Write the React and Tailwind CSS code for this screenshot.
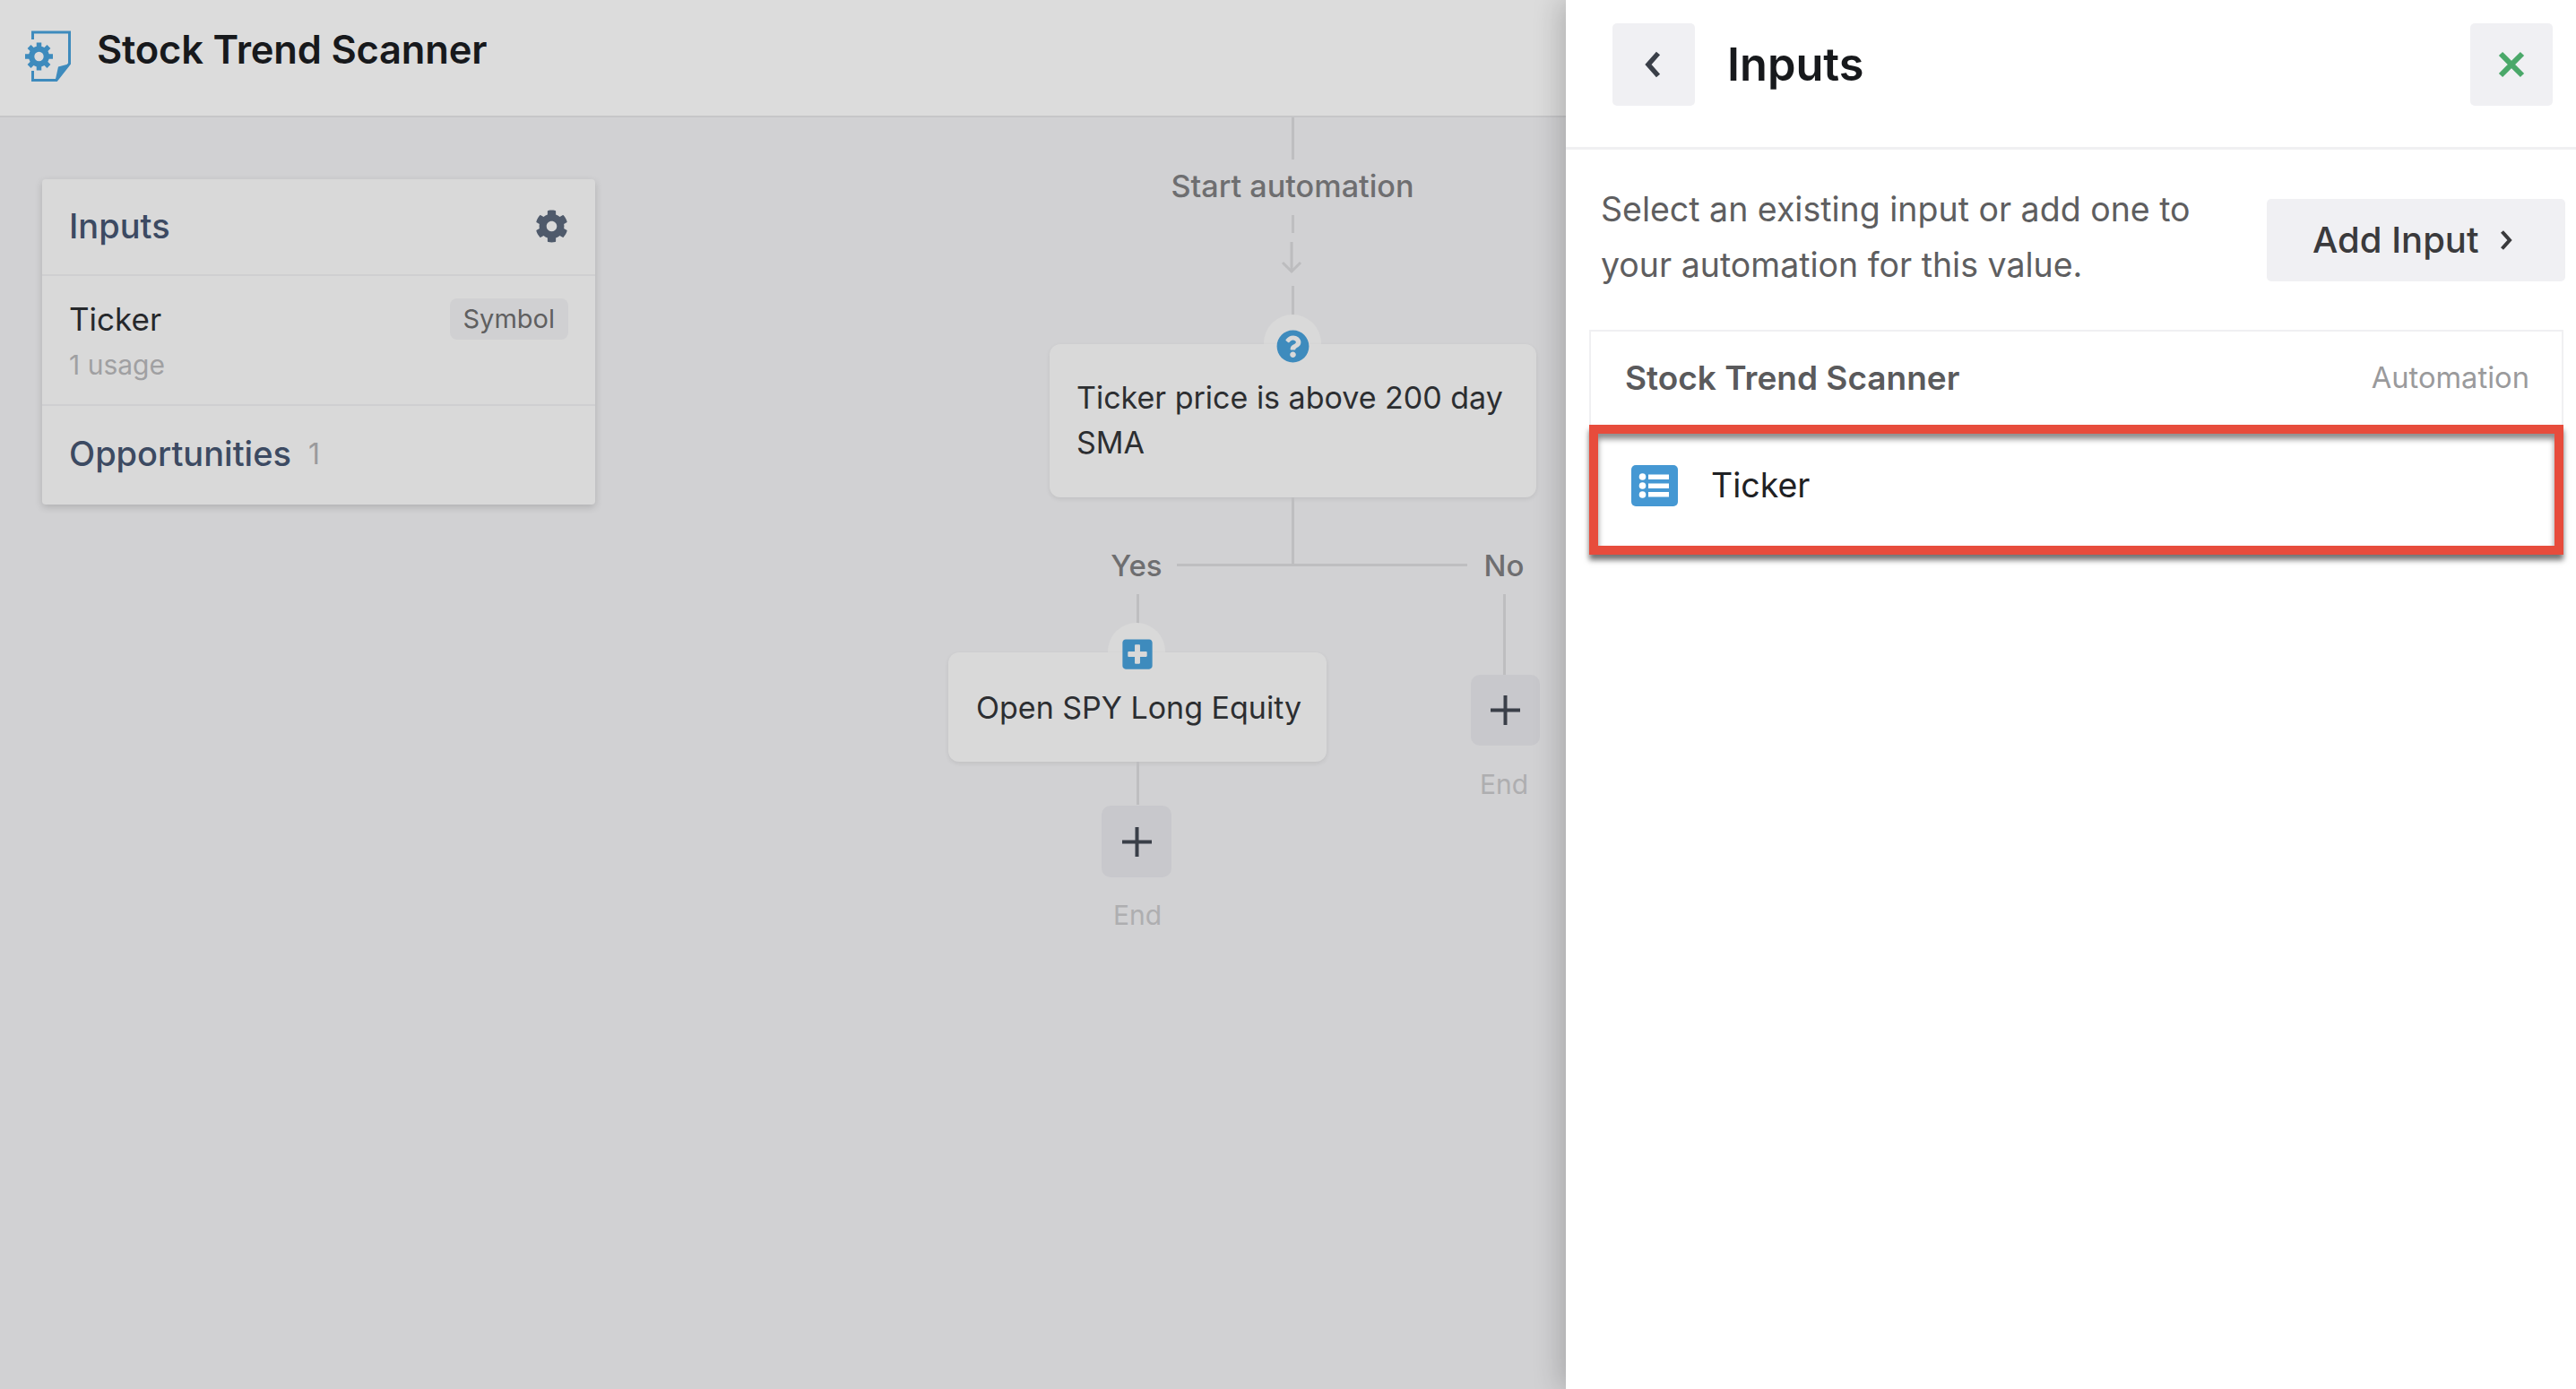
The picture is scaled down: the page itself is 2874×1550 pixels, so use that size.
import React from "react";
import { FaCog, FaQuestionCircle, FaPlusSquare } from "react-icons/fa";

function Logo() {
  const teeth = [0, 45, 90, 135];
  return (
    <svg width="51" height="58" viewBox="0 0 51 58" className="shrink-0 text-[#3e8bbd]" fill="none">
      <path d="M8.5 10V2H49.5V37L35 55.5H8.5V45" stroke="currentColor" strokeWidth="3" />
      <path d="M50 37L37 40.5L33.5 56.5Z" fill="currentColor" />
      <circle cx="15.5" cy="29" r="8.5" stroke="currentColor" strokeWidth="6" />
      {teeth.map((a) => (
        <line key={a} x1="15.5" y1="13.5" x2="15.5" y2="44.5" stroke="currentColor" strokeWidth="5.5" transform={`rotate(${a} 15.5 29)`} />
      ))}
      <circle cx="15.5" cy="29" r="5.2" fill="#dcdcdc" />
    </svg>
  );
}

function ListIcon() {
  return (
    <svg width="52" height="46" viewBox="0 0 52 46" className="shrink-0">
      <rect width="52" height="46" rx="5" fill="#4598d3" />
      <g fill="#ffffff">
        <circle cx="12.5" cy="13" r="3.8" />
        <circle cx="12.5" cy="23" r="3.8" />
        <circle cx="12.5" cy="33" r="3.8" />
        <rect x="19" y="10.5" width="23" height="5.5" />
        <rect x="19" y="20.5" width="23" height="5.5" />
        <rect x="19" y="30" width="23" height="5.5" />
      </g>
    </svg>
  );
}

function PlusGlyph() {
  return (
    <svg width="33" height="33" viewBox="0 0 33 33">
      <path d="M16.5 0V33M0 16.5H33" stroke="#3a3f48" strokeWidth="4" />
    </svg>
  );
}

function Bump({ className }) {
  return <div className={`absolute w-[64px] h-[64px] rounded-full bg-[#d9d9d9] ${className}`} />;
}

function Line({ className }) {
  return <div className={`absolute bg-[#bebec0] ${className}`} />;
}

export default function App() {
  return (
    <div className="flex w-full h-[1550px] overflow-hidden bg-white font-['Inter',sans-serif]">
      <div className="relative flex-1 flex flex-col bg-[#d1d1d3]">
        <header className="h-[131px] shrink-0 flex items-center gap-[29px] pl-[28px] pb-[4px] bg-[#dcdcdc] border-b-2 border-[#c6c6c8]">
          <Logo />
          <h1 className="mb-[14px] text-[43.5px] leading-none font-semibold text-[#17191c] tracking-[-0.2px]">Stock Trend Scanner</h1>
        </header>

        <section className="mt-[69px] ml-[47px] w-[617px] bg-[#d9d9d9] rounded-[4px] shadow-[0_3px_8px_rgba(0,0,0,0.16)]">
          <div className="h-[108px] flex items-center justify-between pl-[30px] pr-[30px] pb-[2px] border-b-2 border-[#cfcfd1]">
            <span className="text-[38px] font-medium text-[#3c4a62]">Inputs</span>
            <FaCog className="text-[37px] text-[#4f5a6b]" />
          </div>
          <div className="h-[145px] pl-[30px] pr-[30px] pt-[25px] border-b-2 border-[#cfcfd1]">
            <div className="flex items-center justify-between h-[46px]">
              <span className="text-[35px] text-[#26282b]">Ticker</span>
              <span className="h-[46px] px-[15px] flex items-center rounded-[8px] bg-[#d0d0d2] text-[29px] text-[#5f5f60]">Symbol</span>
            </div>
            <div className="mt-[8px] text-[30px] leading-[40px] text-[#a0a0a2]">1 usage</div>
          </div>
          <div className="h-[110px] flex items-center gap-[19px] pl-[30px] pb-[3px]">
            <span className="text-[38px] font-medium text-[#3c4a62]">Opportunities</span>
            <span className="text-[32px] text-[#9a9a9c]">1</span>
          </div>
        </section>

        <Line className="left-[1441px] top-[131px] w-[3px] h-[47px]" />
        <div className="absolute left-[1242px] top-[183px] w-[400px] text-center text-[34.2px] leading-[50px] font-medium text-[#6e6e70]">Start automation</div>
        <Line className="left-[1441px] top-[240px] w-[3px] h-[20px]" />
        <svg className="absolute left-[1429px] top-[270px]" width="24" height="36" viewBox="0 0 24 36" fill="none">
          <path d="M12 0V33M2 23L12 33L22 23" stroke="#bcbcbe" strokeWidth="3" />
        </svg>
        <Line className="left-[1441px] top-[319px] w-[3px] h-[33px]" />

        <Bump className="left-[1410px] top-[351px]" />
        <div className="absolute left-[1171px] top-[384px] w-[543px] h-[171px] rounded-[12px] bg-[#d9d9d9] shadow-[0_2px_5px_rgba(0,0,0,0.08)] pl-[30px] pr-[10px] pt-[35px] text-[34px] leading-[50px] text-[#2c2e31]">
          Ticker price is above 200 day SMA
        </div>
        <FaQuestionCircle className="absolute left-[1424px] top-[368px] text-[37px] text-[#3e8bbd]" />

        <Line className="left-[1441px] top-[555px] w-[3px] h-[75px]" />
        <Line className="left-[1313px] top-[629px] w-[324px] h-[3px]" />
        <div className="absolute left-[1218px] top-[606px] w-[100px] text-center text-[33px] leading-[50px] font-medium text-[#6e6e70]">Yes</div>
        <div className="absolute left-[1628px] top-[606px] w-[100px] text-center text-[33px] leading-[50px] font-medium text-[#6e6e70]">No</div>
        <Line className="left-[1268px] top-[663px] w-[3px] h-[33px]" />
        <Line className="left-[1677px] top-[663px] w-[3px] h-[90px]" />

        <Bump className="left-[1236px] top-[695px]" />
        <div className="absolute left-[1058px] top-[728px] w-[422px] h-[122px] rounded-[12px] bg-[#d9d9d9] shadow-[0_2px_5px_rgba(0,0,0,0.08)] pl-[31px] pt-[37px] text-[34px] leading-[50px] text-[#2c2e31]">
          Open SPY Long Equity
        </div>
        <FaPlusSquare className="absolute left-[1250px] top-[711px] text-[38px] text-[#3e8bbd]" />

        <Line className="left-[1268px] top-[850px] w-[3px] h-[48px]" />
        <button className="absolute left-[1229px] top-[899px] w-[78px] h-[80px] rounded-[10px] bg-[#c8c8cc] flex items-center justify-center">
          <PlusGlyph />
        </button>
        <div className="absolute left-[1219px] top-[1001px] w-[100px] text-center text-[30px] leading-[40px] text-[#aeaeb0]">End</div>

        <button className="absolute left-[1641px] top-[753px] w-[77px] h-[79px] rounded-[10px] bg-[#c8c8cc] flex items-center justify-center">
          <PlusGlyph />
        </button>
        <div className="absolute left-[1628px] top-[855px] w-[100px] text-center text-[30px] leading-[40px] text-[#aeaeb0]">End</div>
      </div>

      <aside className="relative z-10 w-[1127px] shrink-0 bg-white shadow-[-6px_0_30px_rgba(0,0,0,0.2)]">
        <div className="h-[167px] flex items-start justify-between pt-[26px] pl-[52px] pr-[26px] border-b-[3px] border-[#f0f0f2]">
          <div className="flex items-center gap-[36px]">
            <button className="w-[92px] h-[92px] rounded-[5px] bg-[#f0f0f3] flex items-center justify-center">
              <svg width="20" height="30" viewBox="0 0 20 30" fill="none">
                <path d="M15 2.5L4 15L15 27.5" stroke="#3a3f48" strokeWidth="5.5" />
              </svg>
            </button>
            <h2 className="text-[50.5px] leading-none font-semibold text-[#17191c]">Inputs</h2>
          </div>
          <button className="w-[92px] h-[92px] rounded-[5px] bg-[#f0f0f3] flex items-center justify-center">
            <svg width="30" height="30" viewBox="0 0 30 30" fill="none">
              <path d="M3 3L27 27M27 3L3 27" stroke="#4aa869" strokeWidth="6" />
            </svg>
          </button>
        </div>

        <div className="flex items-center justify-between h-[201px] pl-[39px] pr-[12px]">
          <p className="w-[700px] mb-[6px] text-[37.5px] leading-[62px] text-[#5e5e60]">
            Select an existing input or add one to your automation for this value.
          </p>
          <button className="w-[333px] h-[92px] rounded-[5px] bg-[#f0f0f3] flex items-center justify-start pl-[51px] gap-[23px] text-[40px] font-medium text-[#3a3a3c]">
            Add Input
            <svg width="14" height="24" viewBox="0 0 14 24" fill="none">
              <path d="M2.5 2.5L11 12L2.5 21.5" stroke="#3a3a3c" strokeWidth="4" />
            </svg>
          </button>
        </div>

        <div className="ml-[26px] w-[1087px] h-[106px] flex items-center justify-between pl-[38px] pr-[36px] border-t-2 border-x-2 border-[#f0f0f2]">
          <span className="text-[37px] font-semibold text-[#5a5a5c]">Stock Trend Scanner</span>
          <span className="text-[32.7px] text-[#9a9a9c]">Automation</span>
        </div>
        <div className="ml-[26px] w-[1087px] h-[145px] flex items-start gap-[37px] pl-[37px] border-[10px] border-[#e74c3c] shadow-[0_6px_6px_rgba(0,0,0,0.55),inset_0_6px_6px_rgba(0,0,0,0.45)]">
          <div className="mt-[35px]"><ListIcon /></div>
          <span className="mt-[33px] text-[37.5px] leading-[50px] text-[#1f2124]">Ticker</span>
        </div>
      </aside>
    </div>
  );
}
